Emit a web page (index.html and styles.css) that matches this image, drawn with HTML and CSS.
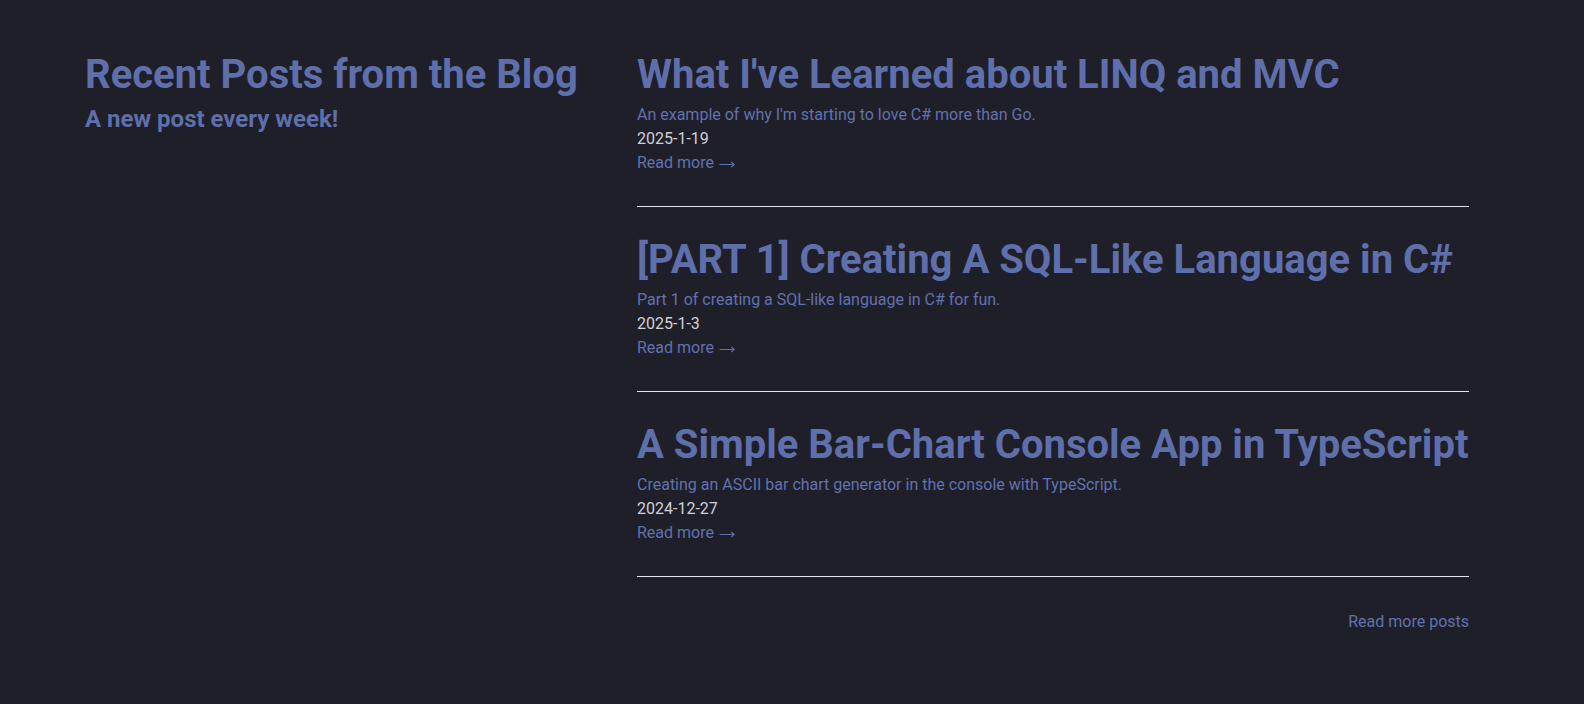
FILE: index.html
```html
<!DOCTYPE html>
<html lang="en">
<head>
<meta charset="utf-8">
<title>Blog</title>
<link rel="stylesheet" href="styles.css">
</head>
<body>
<main class="page">
  <section class="intro">
    <h1 class="intro-title">Recent Posts from the Blog</h1>
    <p class="intro-sub">A new post every week!</p>
  </section>
  <section class="posts">
    <article class="post">
      <h2 class="post-title">What I've Learned about LINQ and MVC</h2>
      <p class="post-desc">An example of why I'm starting to love C# more than Go.</p>
      <p class="post-date">2025-1-19</p>
      <a class="post-link" href="#">Read more <svg class="arrow" width="16" height="10" viewBox="0 0 16 10" aria-hidden="true"><path d="M0.5 5.5H15.2M12.2 2.8L15.2 5.5L12.2 8.2" fill="none" stroke="currentColor" stroke-width="1.1"/></svg></a>
    </article>
    <article class="post">
      <h2 class="post-title">[PART 1] Creating A SQL-Like Language in C#</h2>
      <p class="post-desc">Part 1 of creating a SQL-like language in C# for fun.</p>
      <p class="post-date">2025-1-3</p>
      <a class="post-link" href="#">Read more <svg class="arrow" width="16" height="10" viewBox="0 0 16 10" aria-hidden="true"><path d="M0.5 5.5H15.2M12.2 2.8L15.2 5.5L12.2 8.2" fill="none" stroke="currentColor" stroke-width="1.1"/></svg></a>
    </article>
    <article class="post">
      <h2 class="post-title">A Simple Bar-Chart Console App in TypeScript</h2>
      <p class="post-desc">Creating an ASCII bar chart generator in the console with TypeScript.</p>
      <p class="post-date">2024-12-27</p>
      <a class="post-link" href="#">Read more <svg class="arrow" width="16" height="10" viewBox="0 0 16 10" aria-hidden="true"><path d="M0.5 5.5H15.2M12.2 2.8L15.2 5.5L12.2 8.2" fill="none" stroke="currentColor" stroke-width="1.1"/></svg></a>
    </article>
    <div class="more"><a class="more-link" href="#">Read more posts</a></div>
  </section>
</main>
</body>
</html>
```
FILE: styles.css
```css
html, body {
  margin: 0;
  padding: 0;
  background: #1f1f29;
  height: 100%;
}
body {
  font-family: Roboto, "Liberation Sans", sans-serif;
  color: #5e6fab;
}
.page {
  display: flex;
  padding: 55px 0 0 85px;
}
.intro {
  width: 552px;
  flex: none;
}
.intro-title {
  margin: 0;
  font-size: 40px;
  line-height: 40px;
  font-weight: 700;
  color: #5e6fab;
}
.intro-sub {
  margin: 8px 0 0;
  font-size: 24px;
  line-height: 32px;
  font-weight: 700;
  color: #5e6fab;
}
.posts {
  width: 832px;
  flex: none;
}
.post {
  padding-bottom: 31px;
  border-bottom: 1px solid #e4e4ec;
  margin-bottom: 33px;
}
.post-title {
  margin: 0 0 8px;
  font-size: 40px;
  line-height: 40px;
  font-weight: 700;
  color: #5e6fab;
  white-space: nowrap;
}
.post-desc {
  margin: 0;
  font-size: 16px;
  line-height: 24px;
  color: #6172b0;
}
.post-date {
  margin: 0;
  font-size: 16px;
  line-height: 24px;
  color: #cfcfd6;
}
.post-link {
  display: block;
  font-size: 16px;
  line-height: 24px;
  color: #6172b0;
  text-decoration: none;
}
.arrow {
  vertical-align: -1px;
  margin-left: 1px;
}
.more {
  display: flex;
  justify-content: flex-end;
}
.more-link {
  font-size: 16px;
  line-height: 24px;
  color: #6172b0;
  text-decoration: none;
}
```
